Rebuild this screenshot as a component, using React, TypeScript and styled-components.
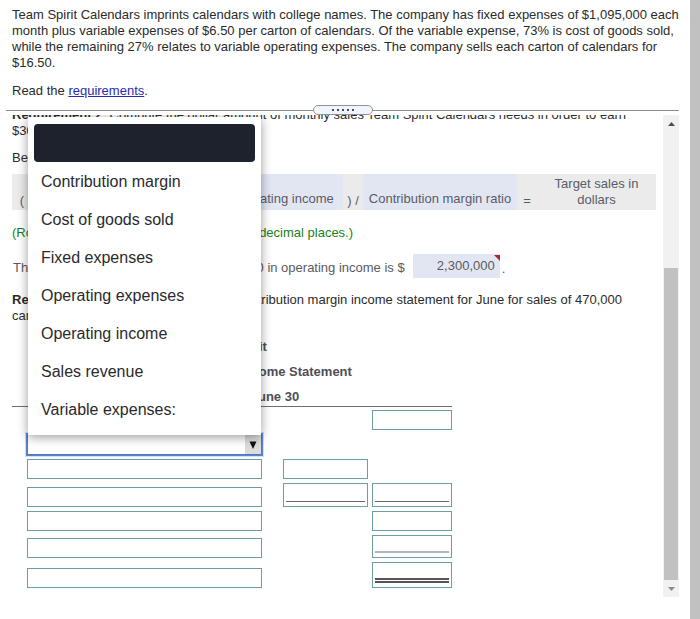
import React from "react";
import styled, { createGlobalStyle } from "styled-components";

const GlobalStyle = createGlobalStyle`
  * { box-sizing: border-box; }
  body {
    margin: 0;
    background: #fff;
    color: #2b2b2b;
    font: 13px/16px "Liberation Sans", Arial, sans-serif;
  }
  button, input, select { font: inherit; color: inherit; }
`;

const Page = styled.div`
  display: flex;
  min-height: 100vh;
`;
const Main = styled.main`
  flex: 1;
  min-width: 0;
  padding: 7px 0 0 6px;
`;
const PageScroll = styled.div`
  width: 10px;
  background: #c1c1c1;
`;

const Question = styled.section`
  padding: 0 4px 6px 6px;
`;
const Para = styled.p`
  margin: 0 0 12px;
  &:last-child { margin-bottom: 0; }
`;
const Link = styled.a`
  color: #2a2ab0;
`;

const Divider = styled.div`
  display: flex;
  align-items: center;
  margin-right: 11px;
`;
const Line = styled.span`
  flex: 1;
  height: 1px;
  background: #8c8c8c;
`;
const Handle = styled.button`
  display: flex;
  align-items: center;
  justify-content: center;
  gap: 3px;
  width: 60px;
  height: 10px;
  padding: 0;
  border: 1px solid #8b93a3;
  border-radius: 5px;
  background: #f1f4fb;
`;
const Dot = styled.i`
  width: 2px;
  height: 2px;
  background: #444b5c;
`;

const Work = styled.section`
  display: flex;
  margin-right: 11px;
  overflow: hidden;
`;
const Content = styled.div`
  flex: 1;
  min-width: 0;
  padding: 0 7px 5px 6px;
`;
const Intro = styled.p`
  margin: -8px 0 11px;
`;
const Begin = styled.p`
  margin: 0 0 8px;
`;

const Formula = styled.div`
  display: flex;
  min-height: 36px;
  background: #ebebeb;
  color: #5a5c66;
`;
const Term = styled.span<{ $grow: number }>`
  flex: ${(p) => p.$grow} 1 0;
  display: flex;
  align-items: flex-end;
  justify-content: center;
  padding-bottom: 3px;
  background: #e2e6f3;
  white-space: nowrap;
`;
const Sign = styled.span`
  flex: 0 0 20px;
  display: flex;
  align-items: flex-end;
  justify-content: center;
  padding-bottom: 1px;
  white-space: nowrap;
`;
const Result = styled.span`
  flex: 119 1 0;
  padding-top: 2px;
  text-align: center;
`;

const Rounding = styled.p`
  margin: 15px 0 13px;
  color: #17821c;
`;
const Answer = styled.div`
  display: flex;
  align-items: center;
  gap: 8px;
  margin: 0 0 14px;
  padding-left: 1px;
  color: #5a5a60;
`;
const AnswerText = styled.label`
  padding-top: 4px;
`;
const AnswerField = styled.span`
  position: relative;
  display: flex;
  height: 24px;
  &::after {
    content: "";
    position: absolute;
    top: 1px;
    right: 0;
    border-top: 6px solid #a3283c;
    border-left: 6px solid transparent;
  }
`;
const AnswerInput = styled.input`
  width: 87px;
  padding: 0 5px;
  border: 0;
  background: #e2e6f3;
  text-align: right;
`;
const Stop = styled.span`
  margin-left: -6px;
  padding-top: 6px;
`;

const Statement = styled.table`
  width: 440px;
  margin-top: 14px;
  table-layout: fixed;
  border-spacing: 0 4px;
`;
const Caption = styled.caption`
  margin-bottom: -1px;
  border-bottom: 1px solid #6f6f6f;
  color: #4f4f55;
  font-weight: bold;
`;
const Heading = styled.div`
  margin-top: 7px;
  line-height: 18px;
  &:first-child { margin-top: 0; }
`;
const LabelCol = styled.col`width: 250px;`;
const InnerCol = styled.col`width: 106px;`;
const Row = styled.tr<{ $height: number }>`
  height: ${(p) => p.$height}px;
`;
const Cell = styled.td<{ $indent: number }>`
  padding: 0 0 0 ${(p) => p.$indent}px;
  vertical-align: bottom;
`;
const Pick = styled.select`
  display: block;
  width: 100%;
  height: 20px;
  appearance: none;
  border: 1px solid #6f9da6;
  border-radius: 0;
  background: #fff;
`;

type Rule = "none" | "single" | "light" | "double";
const rules: Record<Rule, string> = {
  none: "0",
  single: "1px solid #6c6468",
  light: "2px solid #b5b5b5",
  double: "5px double #555",
};
const Box = styled.span<{ $height: number }>`
  display: flex;
  height: ${(p) => p.$height}px;
  padding: 0 2px 4px;
  border: 1px solid #6f9da6;
`;
const Amount = styled.input<{ $rule: Rule }>`
  width: 100%;
  min-width: 0;
  padding: 0;
  border: 0;
  border-bottom: ${(p) => rules[p.$rule]};
  background: transparent;
  text-align: right;
`;

const Picker = styled.div`
  position: relative;
`;
const Combo = styled.button`
  display: flex;
  justify-content: flex-end;
  width: 100%;
  height: 21px;
  padding: 0;
  border: 1px solid #4d78c8;
  outline: 1px solid #5b84cf;
  box-shadow: 0 0 0 2px #cfe0f8;
  background: #fff;
`;
const Arrow = styled.span`
  display: grid;
  place-items: center;
  width: 16px;
  height: 100%;
  background: #dcdcdc;
`;
const Menu = styled.ul`
  position: absolute;
  left: 1px;
  right: 1px;
  bottom: 20px;
  margin: 0;
  padding: 7px 6px;
  list-style: none;
  background: #fff;
  box-shadow: 0 2px 10px rgba(0, 0, 0, 0.4);
  color: #2a2a2c;
  font-size: 16px;
`;
const Option = styled.li`
  height: 38px;
  padding: 0 7px;
  border-radius: 4px;
  line-height: 40px;
  &[aria-selected="true"] { background: #1d222d; }
`;

const Scroll = styled.div`
  display: flex;
  flex-direction: column;
  width: 16px;
  background: #f1f1f1;
`;
const ScrollButton = styled.button`
  display: grid;
  place-items: center;
  height: 17px;
  padding: 0;
  border: 0;
  background: #f1f1f1;
`;
const Gap = styled.span`
  flex: 136;
`;
const Thumb = styled.span`
  flex: 312;
  margin: 0 1px;
  background: #c1c1c1;
`;

const options = [
  "",
  "Contribution margin",
  "Cost of goods sold",
  "Fixed expenses",
  "Operating expenses",
  "Operating income",
  "Sales revenue",
  "Variable expenses:",
];

type RowData = { height: number; label?: "pick" | "open"; inner?: Rule; outer?: Rule };
const rows: RowData[] = [
  { height: 20, outer: "none" },
  { height: 21, label: "open" },
  { height: 20, label: "pick", inner: "none" },
  { height: 24, label: "pick", inner: "single", outer: "single" },
  { height: 20, label: "pick", outer: "none" },
  { height: 23, label: "pick", outer: "light" },
  { height: 26, label: "pick", outer: "double" },
];

function OpenPicker() {
  return (
    <Picker>
      <Combo type="button" role="combobox" aria-expanded="true" aria-controls="accounts" aria-label="Account">
        <Arrow>
          <svg width="8" height="8" viewBox="0 0 8 8"><path d="M0.5 0.5h7L4 8z" fill="#111" /></svg>
        </Arrow>
      </Combo>
      <Menu id="accounts" role="listbox" aria-label="Account">
        {options.map((name) => (
          <Option key={name} role="option" aria-selected={name === ""}>{name}</Option>
        ))}
      </Menu>
    </Picker>
  );
}

function AmountBox({ rule, height, label }: { rule: Rule; height: number; label: string }) {
  return (
    <Box $height={height}>
      <Amount $rule={rule} aria-label={label} />
    </Box>
  );
}

export default function App() {
  return (
    <>
      <GlobalStyle />
      <Page>
        <Main>
          <Question>
            <Para>
              Team Spirit Calendars imprints calendars with college names. The company has fixed expenses of $1,095,000
              each month plus variable expenses of $6.50 per carton of calendars. Of the variable expense, 73% is cost of
              goods sold, while the remaining 27% relates to variable operating expenses. The company sells each carton of
              calendars for $16.50.
            </Para>
            <Para>Read the <Link href="#requirements">requirements</Link>.</Para>
          </Question>
          <Divider>
            <Line />
            <Handle type="button" aria-label="Resize panels"><Dot /><Dot /><Dot /><Dot /><Dot /></Handle>
            <Line />
          </Divider>
          <Work>
            <Content>
              <Intro>
                <b>Requirement 2.</b> Compute the dollar amount of monthly sales Team Spirit Calendars needs in order to
                earn $300,000.
              </Intro>
              <Begin>Begin by identifying the formula.</Begin>
              <Formula>
                <Sign>(</Sign>
                <Term $grow={133}>Fixed expenses</Term>
                <Sign>+</Sign>
                <Term $grow={158}>Target operating income</Term>
                <Sign>) /</Sign>
                <Term $grow={154}>Contribution margin ratio</Term>
                <Sign>=</Sign>
                <Result>Target sales in<br />dollars</Result>
              </Formula>
              <Rounding>(Round the required sales in dollars to two decimal places.)</Rounding>
              <Answer>
                <AnswerText htmlFor="target">The target sales in dollars to earn $300,000 in operating income is $</AnswerText>
                <AnswerField><AnswerInput id="target" defaultValue="2,300,000" /></AnswerField>
                <Stop>.</Stop>
              </Answer>
              <Para>
                <b>Requirement 3.</b> Prepare Team Spirit's contribution margin income statement for June for sales of
                470,000 cartons.
              </Para>
              <Statement>
                <Caption>
                  <Heading>Team Spirit</Heading>
                  <Heading>Contribution Margin Income Statement</Heading>
                  <Heading>Month Ended June 30</Heading>
                </Caption>
                <colgroup><LabelCol /><InnerCol /><col /></colgroup>
                <tbody>
                  {rows.map((row, i) => (
                    <Row key={i} $height={row.height}>
                      <Cell $indent={15}>
                        {row.label === "open" && <OpenPicker />}
                        {row.label === "pick" && (
                          <Pick aria-label={`Account, row ${i + 1}`} defaultValue="">
                            {options.map((name) => <option key={name}>{name}</option>)}
                          </Pick>
                        )}
                      </Cell>
                      <Cell $indent={21}>
                        {row.inner && <AmountBox rule={row.inner} height={row.height} label={`Detail amount, row ${i + 1}`} />}
                      </Cell>
                      <Cell $indent={4}>
                        {row.outer && <AmountBox rule={row.outer} height={row.height} label={`Total amount, row ${i + 1}`} />}
                      </Cell>
                    </Row>
                  ))}
                </tbody>
              </Statement>
            </Content>
            <Scroll>
              <ScrollButton type="button" aria-label="Scroll up">
                <svg width="7" height="4" viewBox="0 0 7 4"><path d="M0 4h7L3.5 0z" fill="#505050" /></svg>
              </ScrollButton>
              <Gap />
              <Thumb />
              <ScrollButton type="button" aria-label="Scroll down">
                <svg width="7" height="4" viewBox="0 0 7 4"><path d="M0 0h7L3.5 4z" fill="#8c8c8c" /></svg>
              </ScrollButton>
            </Scroll>
          </Work>
        </Main>
        <PageScroll />
      </Page>
    </>
  );
}
